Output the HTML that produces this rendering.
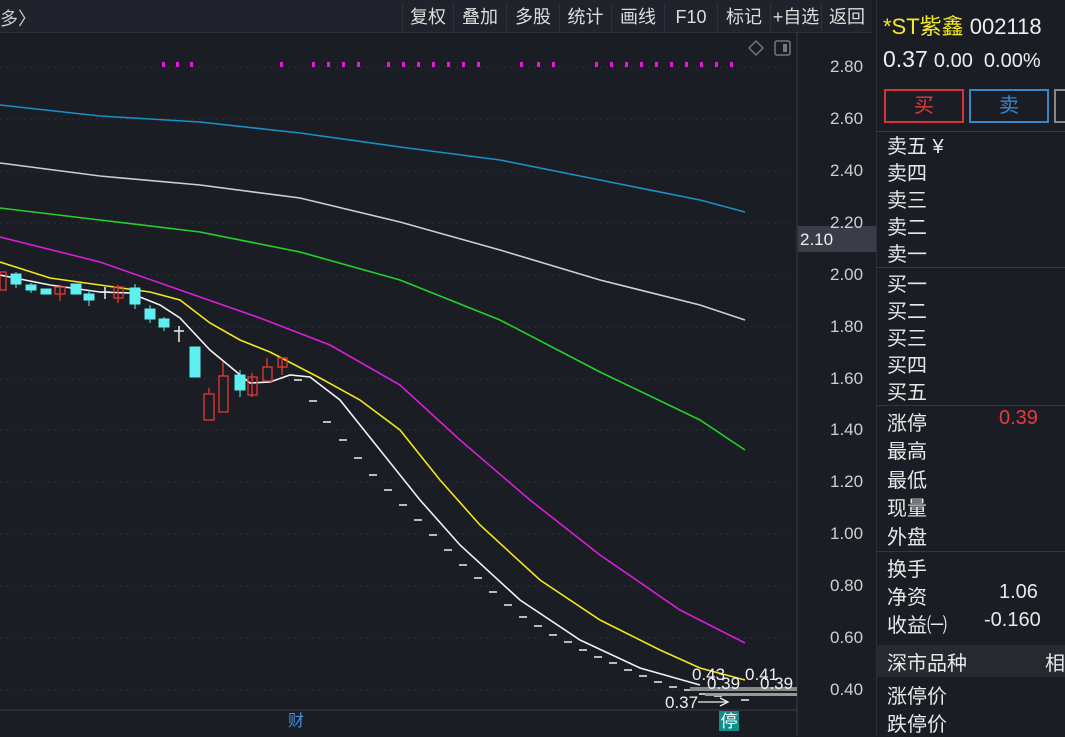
<!DOCTYPE html>
<html><head><meta charset="utf-8"><style>
body{margin:0;width:1065px;height:736px;overflow:hidden;background:#1b1d24;font-family:"Liberation Sans","Noto Sans CJK SC",sans-serif;color:#e6e6e6;position:relative}
.tb{position:absolute;top:0;left:0;width:872px;height:32px;background:#20232b;border-bottom:1px solid #2c2f38}
.tb span.b{position:absolute;top:3px;height:28px;line-height:28px;font-size:18px;color:#ddd;border-left:1px solid #2f323b;text-align:center}
.rp{position:absolute;left:876px;top:0;width:189px;height:736px;background:#1b1d24;border-left:1px solid #2c2f38}
.row{position:absolute;left:10px;font-size:20px;color:#e8e8e8}
.hl{position:absolute;left:0;width:189px;height:1px;background:#34373f}
.ax{position:absolute;left:830px;font-size:17px;color:#cfcfcf}
</style></head><body>
<div class="tb">
<span style="position:absolute;left:0;top:5px;font-size:18px;color:#ccc">多〉</span>
<span class="b" style="left:402px;width:50px">复权</span>
<span class="b" style="left:453px;width:52px">叠加</span>
<span class="b" style="left:506px;width:52px">多股</span>
<span class="b" style="left:559px;width:51px">统计</span>
<span class="b" style="left:611px;width:52px">画线</span>
<span class="b" style="left:664px;width:52px">F10</span>
<span class="b" style="left:717px;width:52px">标记</span>
<span class="b" style="left:770px;width:50px">+自选</span>
<span class="b" style="left:821px;width:50px">返回</span>
</div>
<svg style="position:absolute;left:0;top:0" width="876" height="736">
<line x1="797" y1="32" x2="797" y2="736" stroke="#3a3d46"/>
<g stroke="#2c2f38" stroke-dasharray="2,4">
<line x1="0" y1="67" x2="790" y2="67"/><line x1="0" y1="119" x2="790" y2="119"/><line x1="0" y1="171" x2="790" y2="171"/><line x1="0" y1="223" x2="790" y2="223"/><line x1="0" y1="275" x2="790" y2="275"/><line x1="0" y1="327" x2="790" y2="327"/><line x1="0" y1="379" x2="790" y2="379"/><line x1="0" y1="430" x2="790" y2="430"/><line x1="0" y1="482" x2="790" y2="482"/><line x1="0" y1="534" x2="790" y2="534"/><line x1="0" y1="586" x2="790" y2="586"/><line x1="0" y1="638" x2="790" y2="638"/><line x1="0" y1="690" x2="790" y2="690"/>
</g>
<line x1="0" y1="710" x2="797" y2="710" stroke="#3a3d46"/>
<g fill="none" stroke-width="1.6">
<polyline stroke="#1a8fc8" points="0,105 100,116 200,122 300,133 400,147 500,160 600,180 700,200 745,212"/>
<polyline stroke="#cfcfcf" points="0,163 100,176 200,185 300,198 400,222 500,250 600,280 700,305 745,320"/>
<polyline stroke="#22d22a" points="0,208 100,220 200,232 300,252 400,280 500,320 600,372 700,420 745,450"/>
<polyline stroke="#d81ed8" points="0,237 100,262 180,290 260,318 330,345 400,385 460,440 530,500 600,555 680,610 745,643"/>
<polyline stroke="#f0e81a" points="0,262 50,278 100,285 150,292 180,300 210,323 240,340 270,352 320,378 360,400 400,430 440,480 480,525 540,580 600,620 660,650 700,668 745,680"/>
<polyline stroke="#f2f2f2" points="0,275 50,285 100,292 130,293 160,305 180,318 210,350 250,383 270,382 290,375 310,377 340,400 380,450 420,500 460,545 520,600 580,640 640,668 700,685"/>
</g>
<g fill="#d81ed8">
<rect x="162" y="62" width="3" height="5"/><rect x="176" y="62" width="3" height="5"/><rect x="190" y="62" width="3" height="5"/><rect x="280" y="62" width="3" height="5"/><rect x="312" y="62" width="3" height="5"/><rect x="327" y="62" width="3" height="5"/><rect x="342" y="62" width="3" height="5"/><rect x="357" y="62" width="3" height="5"/><rect x="387" y="62" width="3" height="5"/><rect x="402" y="62" width="3" height="5"/><rect x="417" y="62" width="3" height="5"/><rect x="432" y="62" width="3" height="5"/><rect x="447" y="62" width="3" height="5"/><rect x="462" y="62" width="3" height="5"/><rect x="477" y="62" width="3" height="5"/><rect x="520" y="62" width="3" height="5"/><rect x="537" y="62" width="3" height="5"/><rect x="552" y="62" width="3" height="5"/><rect x="595" y="62" width="3" height="5"/><rect x="610" y="62" width="3" height="5"/><rect x="625" y="62" width="3" height="5"/><rect x="640" y="62" width="3" height="5"/><rect x="655" y="62" width="3" height="5"/><rect x="670" y="62" width="3" height="5"/><rect x="685" y="62" width="3" height="5"/><rect x="700" y="62" width="3" height="5"/><rect x="715" y="62" width="3" height="5"/><rect x="730" y="62" width="3" height="5"/>
</g>
<g fill="#5ef0f0" stroke="#5ef0f0">
<line x1="16" y1="272" x2="16" y2="288"/><rect x="11" y="274" width="10" height="10"/>
<line x1="31" y1="283" x2="31" y2="293"/><rect x="26" y="285" width="10" height="5"/>
<rect x="41" y="289" width="10" height="5"/>
<line x1="89" y1="290" x2="89" y2="306"/><rect x="84" y="294" width="10" height="6"/>
<rect x="71" y="284" width="10" height="10"/>
<line x1="135" y1="284" x2="135" y2="309"/><rect x="130" y="288" width="10" height="16"/>
<line x1="150" y1="305" x2="150" y2="323"/><rect x="145" y="309" width="10" height="10"/>
<line x1="164" y1="317" x2="164" y2="331"/><rect x="159" y="319" width="10" height="8"/>
<rect x="190" y="347" width="10" height="30"/>
<line x1="240" y1="370" x2="240" y2="397"/><rect x="235" y="375" width="10" height="15"/>
</g>
<g fill="none" stroke="#e53935" stroke-width="1.3">
<rect x="0" y="272" width="6" height="18"/>
<line x1="60" y1="287" x2="60" y2="301"/><rect x="55" y="287" width="10" height="7"/>
<line x1="118" y1="285" x2="118" y2="303"/><rect x="114" y="287" width="9" height="11"/>
<line x1="209" y1="388" x2="209" y2="393"/><rect x="204" y="394" width="10" height="26"/>
<line x1="223" y1="362" x2="223" y2="376"/><rect x="219" y="376" width="9" height="36"/>
<line x1="252" y1="373" x2="252" y2="397"/><rect x="248" y="377" width="9" height="18"/>
<line x1="267" y1="358" x2="267" y2="367"/><rect x="263" y="367" width="9" height="14"/>
<line x1="282" y1="358" x2="282" y2="375"/><rect x="278" y="358" width="9" height="9"/>
</g>
<g stroke="#eee" stroke-width="1.5">
<line x1="100" y1="292" x2="110" y2="292"/><line x1="105" y1="287" x2="105" y2="299"/>
<line x1="174" y1="331" x2="184" y2="331"/><line x1="179" y1="326" x2="179" y2="342"/>
</g>
<g stroke="#eee" stroke-width="1.5">
<line x1="294" y1="380" x2="302" y2="380"/><line x1="309" y1="401" x2="317" y2="401"/><line x1="323" y1="422" x2="331" y2="422"/><line x1="339" y1="440" x2="347" y2="440"/><line x1="354" y1="458" x2="362" y2="458"/><line x1="369" y1="475" x2="377" y2="475"/><line x1="384" y1="490" x2="392" y2="490"/><line x1="399" y1="505" x2="407" y2="505"/><line x1="414" y1="520" x2="422" y2="520"/><line x1="429" y1="535" x2="437" y2="535"/><line x1="444" y1="550" x2="452" y2="550"/><line x1="459" y1="565" x2="467" y2="565"/><line x1="474" y1="578" x2="482" y2="578"/><line x1="489" y1="592" x2="497" y2="592"/><line x1="504" y1="605" x2="512" y2="605"/><line x1="519" y1="617" x2="527" y2="617"/><line x1="534" y1="626" x2="542" y2="626"/><line x1="549" y1="635" x2="557" y2="635"/><line x1="564" y1="642" x2="572" y2="642"/><line x1="579" y1="650" x2="587" y2="650"/><line x1="594" y1="657" x2="602" y2="657"/><line x1="609" y1="663" x2="617" y2="663"/><line x1="624" y1="670" x2="632" y2="670"/><line x1="639" y1="676" x2="647" y2="676"/><line x1="654" y1="682" x2="662" y2="682"/><line x1="669" y1="687" x2="677" y2="687"/><line x1="684" y1="690" x2="692" y2="690"/><line x1="699" y1="694" x2="707" y2="694"/><line x1="714" y1="696" x2="722" y2="696"/><line x1="741" y1="700" x2="749" y2="700"/>
</g>
<rect x="690" y="687" width="107" height="4" fill="#888"/>
<rect x="705" y="693" width="92" height="3" fill="#999"/>
<text x="692" y="680" font-size="17" fill="#eee" font-family="Liberation Sans">0.43</text>
<text x="745" y="680" font-size="17" fill="#eee" font-family="Liberation Sans">0.41</text>
<text x="707" y="689" font-size="17" fill="#eee" font-family="Liberation Sans">0.39</text>
<text x="760" y="689" font-size="17" fill="#eee" font-family="Liberation Sans">0.39</text>
<text x="665" y="708" font-size="17" fill="#eee" font-family="Liberation Sans">0.37</text>
<line x1="698" y1="702" x2="728" y2="702" stroke="#eee" stroke-width="1.3"/>
<polyline points="720,698 728,702 720,706" fill="none" stroke="#eee" stroke-width="1.3"/>
<rect x="719" y="711" width="20" height="20" fill="#108e8a"/>
<text x="729" y="727" font-size="17" fill="#fff" text-anchor="middle" font-family="Noto Sans CJK SC">停</text>
<text x="296" y="726" font-size="16" fill="#4a90d9" text-anchor="middle" font-family="Noto Sans CJK SC">财</text>
<path d="M756,41 L763,48 L756,55 L749,48 Z" fill="none" stroke="#777" stroke-width="1.4"/>
<rect x="775" y="41" width="15" height="14" rx="2" fill="none" stroke="#777" stroke-width="1.5"/>
<rect x="783" y="44" width="4" height="8" fill="#777"/>
<rect x="798" y="226" width="78" height="26" fill="#3a3d47"/>
<text x="800" y="245" font-size="17" fill="#eee" font-family="Liberation Sans">2.10</text>
</svg>
<div class="ax" style="top:57px">2.80</div><div class="ax" style="top:109px">2.60</div><div class="ax" style="top:161px">2.40</div><div class="ax" style="top:213px">2.20</div><div class="ax" style="top:265px">2.00</div><div class="ax" style="top:317px">1.80</div><div class="ax" style="top:369px">1.60</div><div class="ax" style="top:420px">1.40</div><div class="ax" style="top:472px">1.20</div><div class="ax" style="top:524px">1.00</div><div class="ax" style="top:576px">0.80</div><div class="ax" style="top:628px">0.60</div><div class="ax" style="top:680px">0.40</div>
<div class="rp">
<div style="position:absolute;left:6px;top:9px;font-size:22px;color:#f2e82a;font-family:'Liberation Sans','Noto Sans CJK SC',sans-serif">*ST紫鑫 <span style="color:#eee">002118</span></div>
<div style="position:absolute;left:6px;top:46px;font-size:22px;color:#eee"><b style="font-weight:normal;font-size:23px">0.37</b> <span style="font-size:20px">0.00&nbsp; 0.00%</span></div>
<div style="position:absolute;left:7px;top:89px;width:76px;height:30px;border:2px solid #d8333a;color:#e03a3a;text-align:center;line-height:30px;font-size:20px">买</div>
<div style="position:absolute;left:92px;top:89px;width:76px;height:30px;border:2px solid #3b86c7;color:#3b86c7;text-align:center;line-height:30px;font-size:20px">卖</div>
<div style="position:absolute;left:177px;top:89px;width:20px;height:30px;border:2px solid #888"></div>
<div class="hl" style="top:131px"></div>
<div class="row" style="top:130px">卖五 ¥</div><div class="row" style="top:157px">卖四</div><div class="row" style="top:184px">卖三</div><div class="row" style="top:211px">卖二</div><div class="row" style="top:238px">卖一</div>
<div class="hl" style="top:267px"></div>
<div class="row" style="top:268px">买一</div><div class="row" style="top:295px">买二</div><div class="row" style="top:322px">买三</div><div class="row" style="top:349px">买四</div><div class="row" style="top:376px">买五</div>
<div class="hl" style="top:405px"></div>
<div class="row" style="top:407px">涨停</div><div class="row" style="top:407px;left:122px;color:#e83a3a">0.39</div>
<div class="row" style="top:435px">最高</div><div class="row" style="top:464px">最低</div><div class="row" style="top:492px">现量</div><div class="row" style="top:521px">外盘</div>
<div class="hl" style="top:551px"></div>
<div class="row" style="top:553px">换手</div><div class="row" style="top:581px">净资</div><div class="row" style="top:581px;left:122px">1.06</div>
<div class="row" style="top:609px">收益㈠</div><div class="row" style="top:609px;left:107px">-0.160</div>
<div style="position:absolute;left:0;top:645px;width:189px;height:32px;background:#262930"></div>
<div class="row" style="top:647px">深市品种</div><div class="row" style="top:647px;left:168px">相</div>
<div class="row" style="top:680px">涨停价</div><div class="row" style="top:708px">跌停价</div>
</div>
</body></html>
